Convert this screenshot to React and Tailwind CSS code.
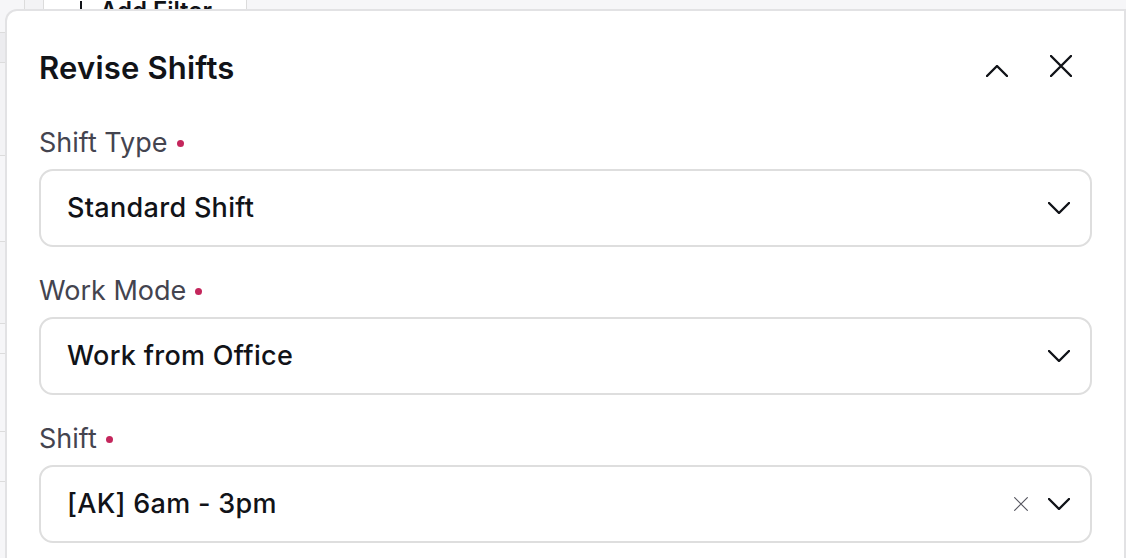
// Revise Shifts drawer
import React from 'react';

const font = { fontFamily: 'Inter, "Noto Sans", "Liberation Sans", sans-serif' };

function ChevronDown() {
    return (
        <svg width="22" height="12" viewBox="0 0 22 12" fill="none" className="shrink-0">
            <polyline points="1,1 11,11 21,1" stroke="#111318" strokeWidth="2.4" strokeLinecap="round" strokeLinejoin="round" />
        </svg>
    );
}

function ChevronUp() {
    return (
        <svg width="22" height="12" viewBox="0 0 22 12" fill="none" className="shrink-0">
            <polyline points="1,11 11,1 21,11" stroke="#111318" strokeWidth="2.4" strokeLinecap="round" strokeLinejoin="round" />
        </svg>
    );
}

function Cross({ size, color, width }) {
    return (
        <svg width={size} height={size} viewBox="0 0 22 22" fill="none" className="shrink-0">
            <path d="M1 1L21 21M21 1L1 21" stroke={color} strokeWidth={width} strokeLinecap="round" />
        </svg>
    );
}

function Field({ label, value, clearable }) {
    return (
        <div>
            <div className="flex items-center h-[32px] pt-[2px] text-[27px] text-[#44444f]">
                <span>{label}</span>
                <span className="ml-[9px] w-[7px] h-[7px] rounded-full bg-[#c4265c]" />
            </div>
            <div className="mt-[11px] h-[78px] flex items-center border-2 border-[#dedede] rounded-[14px] pl-[26px] pr-[20px]">
                <span className="flex-1 text-[27px] tracking-[0.3px] font-medium text-[#111318]">{value}</span>
                {clearable && (
                    <span className="mr-[20px] flex">
                        <Cross size={14} color="#55555f" width={1.8} />
                    </span>
                )}
                <ChevronDown />
            </div>
        </div>
    );
}

export default function App() {
    return (
        <div className="relative w-full h-[558px] overflow-hidden bg-[#f6f6f8]" style={font}>
            {/* Background page behind the drawer */}
            <div className="flex h-[9px]">
                <div className="w-[25px] border-r border-[#dcdcdc]" />
                <div className="w-[18px] bg-[#f3f3f5]" />
                <div className="w-[204px] bg-white border-x border-[#dcdcdc] flex items-end overflow-hidden">
                    <div className="flex items-center gap-[18px] pl-[36px] -mb-[20px] text-[24px] font-semibold text-[#111318]">
                        <span className="w-[2px] h-[20px] bg-[#111318]" />
                        <span>Add Filter</span>
                    </div>
                </div>
            </div>
            <div className="w-[5px] flex flex-col">
                <div className="h-[24px] border-b border-[#dcdcdc]" />
                <div className="h-[30px] bg-[#ececef] border-b border-[#dcdcdc]" />
                <div className="h-[93px] bg-[#f3f3f5] border-b border-[#dcdcdc]" />
                <div className="h-[86px] border-b border-[#dcdcdc]" />
                <div className="h-[82px] bg-[#f3f3f5] border-b border-[#dcdcdc]" />
                <div className="h-[30px] border-b border-[#dcdcdc]" />
                <div className="h-[78px] border-b border-[#dcdcdc]" />
                <div className="h-[50px] border-b border-[#dcdcdc]" />
            </div>

            {/* Drawer */}
            <div className="absolute left-[5px] top-[9px] right-0 bottom-0 bg-white border-l-2 border-t-2 border-r-2 border-[#e2e2e4] rounded-tl-[12px] pl-8 pr-8 pt-[39px]">
                <div className="flex items-center h-[36px]">
                    <h2 className="flex-1 text-[31px] tracking-[0.2px] font-semibold text-[#111318]">Revise Shifts</h2>
                    <span className="flex mt-[6px]"><ChevronUp /></span>
                    <span className="flex ml-[42px] mr-[20px] -mt-[4px]">
                        <Cross size={22} color="#111318" width={2.4} />
                    </span>
                </div>
                <div className="mt-[40px] flex flex-col gap-[27px]">
                    <Field label="Shift Type" value="Standard Shift" />
                    <Field label="Work Mode" value="Work from Office" />
                    <Field label="Shift" value="[AK] 6am - 3pm" clearable />
                </div>
            </div>
        </div>
    );
}
